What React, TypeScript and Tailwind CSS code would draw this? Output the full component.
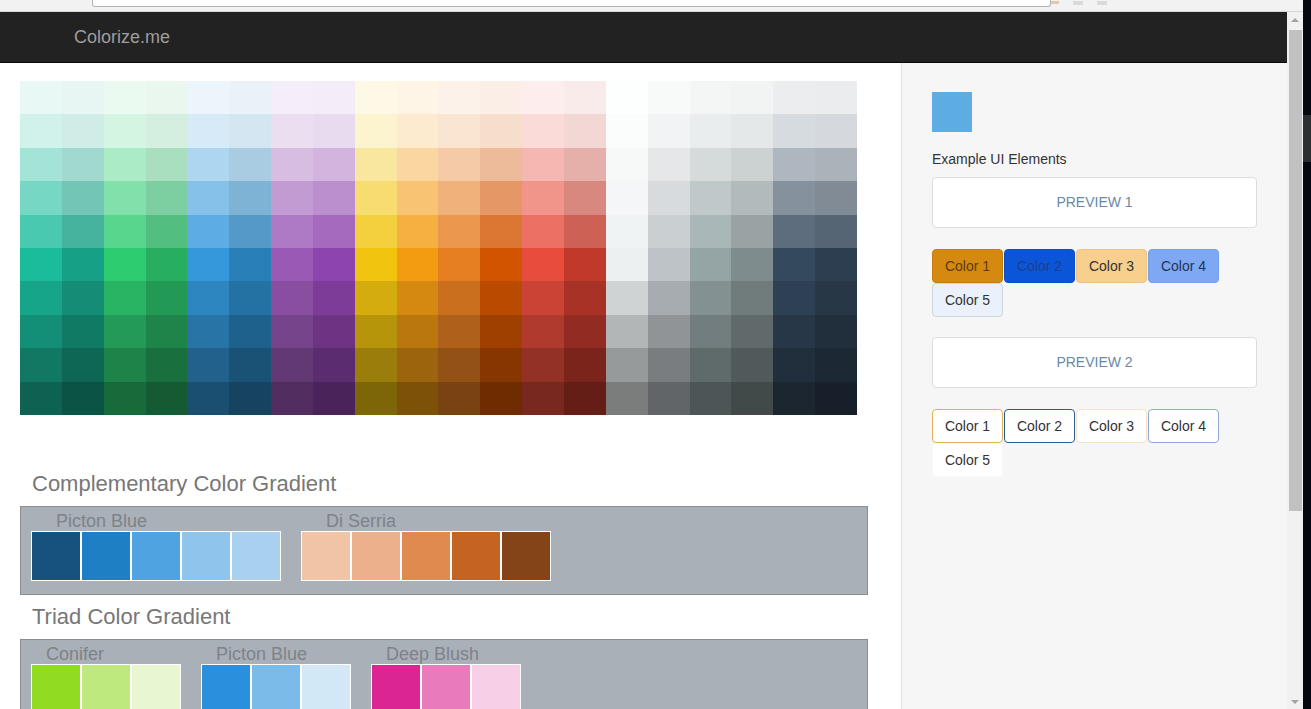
import React from "react";

const bases = [
  "#1abc9c", "#16a085", "#2ecc71", "#27ae60", "#3498db", "#2980b9", "#9b59b6", "#8e44ad",
  "#f1c40f", "#f39c12", "#e67e22", "#d35400", "#e74c3c", "#c0392b", "#ecf0f1", "#bdc3c7",
  "#95a5a6", "#7f8c8d", "#34495e", "#2c3e50",
];

const steps: { t?: number; m?: number }[] = [
  { t: 0.9 }, { t: 0.8 }, { t: 0.6 }, { t: 0.4 }, { t: 0.2 },
  { m: 1 }, { m: 0.88 }, { m: 0.76 }, { m: 0.64 }, { m: 0.52 },
];

function shade(hex: string, s: { t?: number; m?: number }) {
  const n = parseInt(hex.slice(1), 16);
  const c = [(n >> 16) & 255, (n >> 8) & 255, n & 255];
  const out = c.map((v) => {
    if (s.t !== undefined) return Math.round(v + (255 - v) * s.t);
    return Math.round(v * (s.m as number));
  });
  return `rgb(${out[0]}, ${out[1]}, ${out[2]})`;
}

const gridColors: string[] = [];
steps.forEach((s) => bases.forEach((b) => gridColors.push(shade(b, s))));

type Group = { name: string; colors: string[] };

const complementary: Group[] = [
  { name: "Picton Blue", colors: ["#17527d", "#1f7fc4", "#4fa3e0", "#8fc5ec", "#a9d0ef"] },
  { name: "Di Serria", colors: ["#f0c4a4", "#ecb18c", "#e18a4f", "#c46322", "#844417"] },
];

const triad: Group[] = [
  { name: "Conifer", colors: ["#8fdc22", "#bde97f", "#e8f6d2"] },
  { name: "Picton Blue", colors: ["#2a8fdc", "#7bbbe9", "#d3e8f7"] },
  { name: "Deep Blush", colors: ["#da2592", "#e97bbd", "#f7d0e8"] },
];

function GradientBox({ groups, width }: { groups: Group[]; width: string }) {
  return (
    <div className="mt-[9px] w-[848px] bg-[#aab0b7] border border-[#8c8c8c] pl-[10px] pt-[4px] pb-[13px] flex gap-[20px]">
      {groups.map((g) => (
        <div key={g.name} className={width}>
          <div className="pl-[10%] text-[18px] leading-[20px] text-[#7d838a] whitespace-nowrap">{g.name}</div>
          <div className="flex">
            {g.colors.map((c) => (
              <div key={c} className="w-[50px] h-[50px] border border-white" style={{ backgroundColor: c }} />
            ))}
          </div>
        </div>
      ))}
    </div>
  );
}

const btnBase =
  "w-[71px] h-[34px] border rounded-[4px] text-[14px] leading-[20px] flex items-center justify-center";

export default function App() {
  return (
    <div className="w-[1311px] h-[709px] overflow-hidden flex bg-white" style={{ fontFamily: '"Liberation Sans", Arial, sans-serif' }}>
      <div className="w-[1303px] h-full flex flex-col">
        {/* browser chrome fragment */}
        <div className="h-[12px] bg-[#f2f2f2] border-b border-[#d6d6d6] flex pl-[92px] pr-[180px] shrink-0">
          <div className="w-[1016px] h-[7px] bg-white border-x border-b border-[#b5b5b5] rounded-b-[3px]" />
          <div className="flex-1 flex items-start justify-end gap-[14px] pt-[1px] pr-[16px]">
            <span className="w-[8px] h-[3px] bg-[#e3c7b5]" />
            <span className="w-[10px] h-[4px] bg-[#dadada]" />
            <span className="w-[10px] h-[4px] bg-[#dadada]" />
          </div>
        </div>
        <div className="flex flex-1 min-h-0">
          <div className="w-[1287px] flex flex-col">
            {/* navbar */}
            <div className="h-[51px] bg-[#222222] border-b border-[#080808] flex items-center pl-[74px] shrink-0">
              <span className="text-[18px] leading-[20px] text-[#9d9d9d]">Colorize.me</span>
            </div>
            <div className="flex flex-1 min-h-0">
              {/* left column */}
              <div className="w-[901px] pl-[20px] pt-[18px]">
                <div className="w-[837px] h-[334px] grid grid-cols-20 grid-rows-10">
                  {gridColors.map((c, i) => (
                    <div key={i} style={{ backgroundColor: c }} />
                  ))}
                </div>
                <h4 className="mt-[56px] ml-[12px] h-[26px] text-[22px] leading-[26px] font-normal text-[#777777]">
                  Complementary Color Gradient
                </h4>
                <GradientBox groups={complementary} width="w-[250px]" />
                <h4 className="mt-[9px] ml-[12px] h-[26px] text-[22px] leading-[26px] font-normal text-[#777777]">
                  Triad Color Gradient
                </h4>
                <GradientBox groups={triad} width="w-[150px]" />
              </div>
              {/* sidebar */}
              <div className="flex-1 bg-[#f6f6f6] border-l border-[#e3e3e3] pl-[30px] pt-[29px]">
                <div className="w-[40px] h-[40px] bg-[#5dade2]" />
                <p className="mt-[17px] text-[14px] leading-[20px] text-[#333333]">Example UI Elements</p>
                <div className="mt-[8px] w-[325px] h-[51px] bg-white border border-[#dedede] rounded-[4px] flex items-center justify-center text-[14px] text-[#6b87a5]">
                  PREVIEW 1
                </div>
                <div className="mt-[21px] w-[325px] flex flex-wrap gap-x-[1px]">
                  <div className={`${btnBase} bg-[#d68910] border-[#c57e0e] text-[#5a3c06]`}>Color 1</div>
                  <div className={`${btnBase} bg-[#0b56d8] border-[#0a4fc6] text-[#1c3f8c]`}>Color 2</div>
                  <div className={`${btnBase} bg-[#f8cf8c] border-[#eec283] text-[#333333]`}>Color 3</div>
                  <div className={`${btnBase} bg-[#7fa8f4] border-[#74a0ea] text-[#1f3552]`}>Color 4</div>
                  <div className={`${btnBase} bg-[#eaf1fa] border-[#cdd5df] text-[#333333]`}>Color 5</div>
                </div>
                <div className="mt-[20px] w-[325px] h-[51px] bg-white border border-[#dedede] rounded-[4px] flex items-center justify-center text-[14px] text-[#6b87a5]">
                  PREVIEW 2
                </div>
                <div className="mt-[21px] w-[325px] flex flex-wrap gap-x-[1px]">
                  <div className={`${btnBase} bg-white border-[#e3b25c] text-[#333333]`}>Color 1</div>
                  <div className={`${btnBase} bg-white border-[#2b5a94] text-[#333333]`}>Color 2</div>
                  <div className={`${btnBase} bg-white border-[#f7e2c2] text-[#333333]`}>Color 3</div>
                  <div className={`${btnBase} bg-white border-[#8faad5] text-[#333333]`}>Color 4</div>
                  <div className={`${btnBase} bg-white border-[#f7f9fc] text-[#333333]`}>Color 5</div>
                </div>
              </div>
            </div>
          </div>
          {/* scrollbar */}
          <div className="w-[16px] bg-[#f1f1f1] flex flex-col items-center">
            <div className="mt-[6px] w-0 h-0 border-x-[4px] border-x-transparent border-b-[4px] border-b-[#a3a3a3]" />
            <div className="mt-[8px] w-[13px] h-[481px] bg-[#c1c1c1]" />
            <div className="mt-auto mb-[5px] w-0 h-0 border-x-[4px] border-x-transparent border-t-[4px] border-t-[#a3a3a3]" />
          </div>
        </div>
      </div>
      {/* dark strip at the right edge */}
      <div className="w-[8px] h-full bg-[#05090f] flex flex-col">
        <div className="mt-[115px] h-[47px] bg-[#2b2e33]" />
      </div>
    </div>
  );
}
